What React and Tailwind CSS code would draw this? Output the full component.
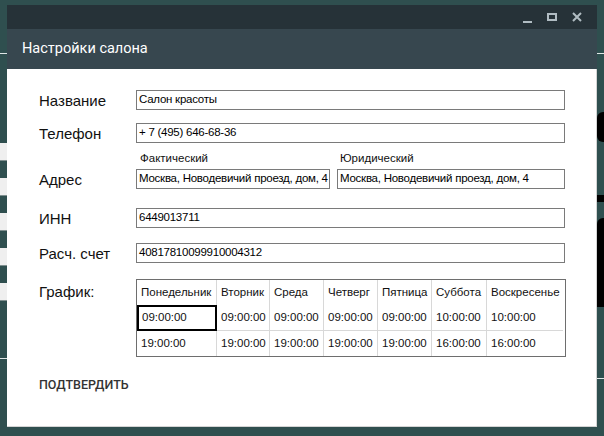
import React from "react";

const days = ["Понедельник", "Вторник", "Среда", "Четверг", "Пятница", "Суббота", "Воскресенье"];
const opens = ["09:00:00", "09:00:00", "09:00:00", "09:00:00", "09:00:00", "10:00:00", "10:00:00"];
const closes = ["19:00:00", "19:00:00", "19:00:00", "19:00:00", "19:00:00", "16:00:00", "16:00:00"];

const labelFont = { fontFamily: '"Liberation Sans", Arial, sans-serif' };

function Field({ value, className = "" }) {
  return (
    <div
      className={`h-[20px] border border-[#7a7a7a] bg-white pl-[2px] flex items-center text-[11.5px] leading-none tracking-[-0.25px] text-black whitespace-nowrap overflow-hidden ${className}`}
    >
      {value}
    </div>
  );
}

function Row({ label, children, className = "" }) {
  return (
    <div className={`flex items-center h-[20px] ${className}`}>
      <div className="w-[97px] text-[15px] leading-none text-[#111]">{label}</div>
      {children}
    </div>
  );
}

function Schedule() {
  const cols = "grid grid-cols-[80px_53px_54px_54px_54px_55px_76px]";
  return (
    <div className="w-[430px] border border-[#6e6e6e] bg-white text-[11.5px] leading-none text-[#111]">
      <div className={cols}>
        {days.map((d, i) => (
          <div
            key={d}
            className={`h-[25px] pl-[4px] flex items-center ${i < 6 ? "border-r border-[#d8d8d8]" : ""}`}
          >
            {d}
          </div>
        ))}
      </div>
      <div className={cols}>
        {opens.map((t, i) => (
          <div
            key={i}
            className={`h-[26px] flex items-center ${
              i === 0
                ? "border-2 border-black pl-[3px]"
                : `pl-[4px] border-b border-[#d8d8d8] ${i < 6 ? "border-r" : ""}`
            }`}
          >
            {t}
          </div>
        ))}
      </div>
      <div className={cols}>
        {closes.map((t, i) => (
          <div
            key={i}
            className={`h-[25px] pl-[4px] flex items-center ${i < 6 ? "border-r border-[#d8d8d8]" : ""}`}
          >
            {t}
          </div>
        ))}
      </div>
    </div>
  );
}

export default function App() {
  return (
    <div className="w-[604px] h-[436px] bg-[#2f4f4f] flex flex-col overflow-hidden" style={labelFont}>
      <div className="h-[5px] shrink-0" />
      <div className="flex flex-1">
        {/* left backdrop strip */}
        <div className="w-[7px] flex flex-col">
          <div className="h-[48px]" />
          <div className="h-px bg-[#dfe6e6]" />
          <div className="h-[89px]" />
          {[0, 1, 2, 3, 4].map((i) => (
            <div key={i} className="flex flex-col">
              <div className="h-[18px] bg-[#efefef] border-b border-[#7f8f8f]" />
              <div className="h-[17px]" />
            </div>
          ))}
          <div className="h-[40px]" />
          <div className="h-px bg-[#dfe6e6]" />
        </div>

        {/* window */}
        <div className="w-[590px] flex flex-col">
          <div className="h-[24px] bg-[#263238] flex items-center justify-end pr-[15px] gap-[15px]">
            <div className="w-[9px] h-[2px] bg-[#b0bcc2] mt-[10px]" />
            <div className="w-[10px] h-[8px] border-2 border-[#b0bcc2]" />
            <svg width="10" height="10" viewBox="0 0 10 10">
              <path d="M1 1L9 9M9 1L1 9" stroke="#b0bcc2" strokeWidth="2" />
            </svg>
          </div>
          <div
            className="h-[40px] bg-[#37474f] flex items-center pl-[15px] text-white text-[14.5px]"
            style={{ fontFamily: "Roboto, sans-serif" }}
          >
            Настройки салона
          </div>
          <div className="h-[358px] bg-white border-r border-b border-[#d4d4d4] pl-[32px] pt-[21px] flex flex-col">
            <Row label="Название">
              <Field value="Салон красоты" className="w-[429px]" />
            </Row>
            <Row label="Телефон" className="mt-[13px]">
              <Field value="+ 7 (495) 646-68-36" className="w-[429px]" />
            </Row>
            <div className="flex text-[11.5px] leading-none text-[#111] mt-[6px] h-[20px] items-center">
              <div className="w-[101px]" />
              <div className="w-[200px]">Фактический</div>
              <div>Юридический</div>
            </div>
            <Row label="Адрес">
              <Field value="Москва, Новодевичий проезд, дом, 4" className="w-[194px]" />
              <Field value="Москва, Новодевичий проезд, дом, 4" className="w-[228px] ml-[7px]" />
            </Row>
            <Row label="ИНН" className="mt-[19px]">
              <Field value="6449013711" className="w-[429px]" />
            </Row>
            <Row label="Расч. счет" className="mt-[15px]">
              <Field value="40817810099910004312" className="w-[429px]" />
            </Row>
            <div className="flex items-start mt-[16px]">
              <div className="w-[97px] text-[15px] leading-none text-[#111] mt-[5px]">График:</div>
              <Schedule />
            </div>
            <div
              className="mt-[22px] text-[12.5px] leading-none font-medium text-[#333]"
              style={{ fontFamily: "Roboto, sans-serif" }}
            >
              ПОДТВЕРДИТЬ
            </div>
          </div>
        </div>

        {/* right backdrop strip */}
        <div className="w-[7px] flex flex-col">
          <div className="h-[48px]" />
          <div className="h-px bg-[#dfe6e6]" />
          <div className="h-[58px]" />
          <div className="h-[30px] bg-black rounded-l-[6px]" />
          <div className="h-[53px]" />
          <div className="h-[7px] bg-black" />
          <div className="h-[16px]" />
          <div className="h-[89px] bg-black rounded-tl-[6px]" />
          <div className="h-[71px]" />
          <div className="h-px bg-[#dfe6e6]" />
        </div>
      </div>
    </div>
  );
}
